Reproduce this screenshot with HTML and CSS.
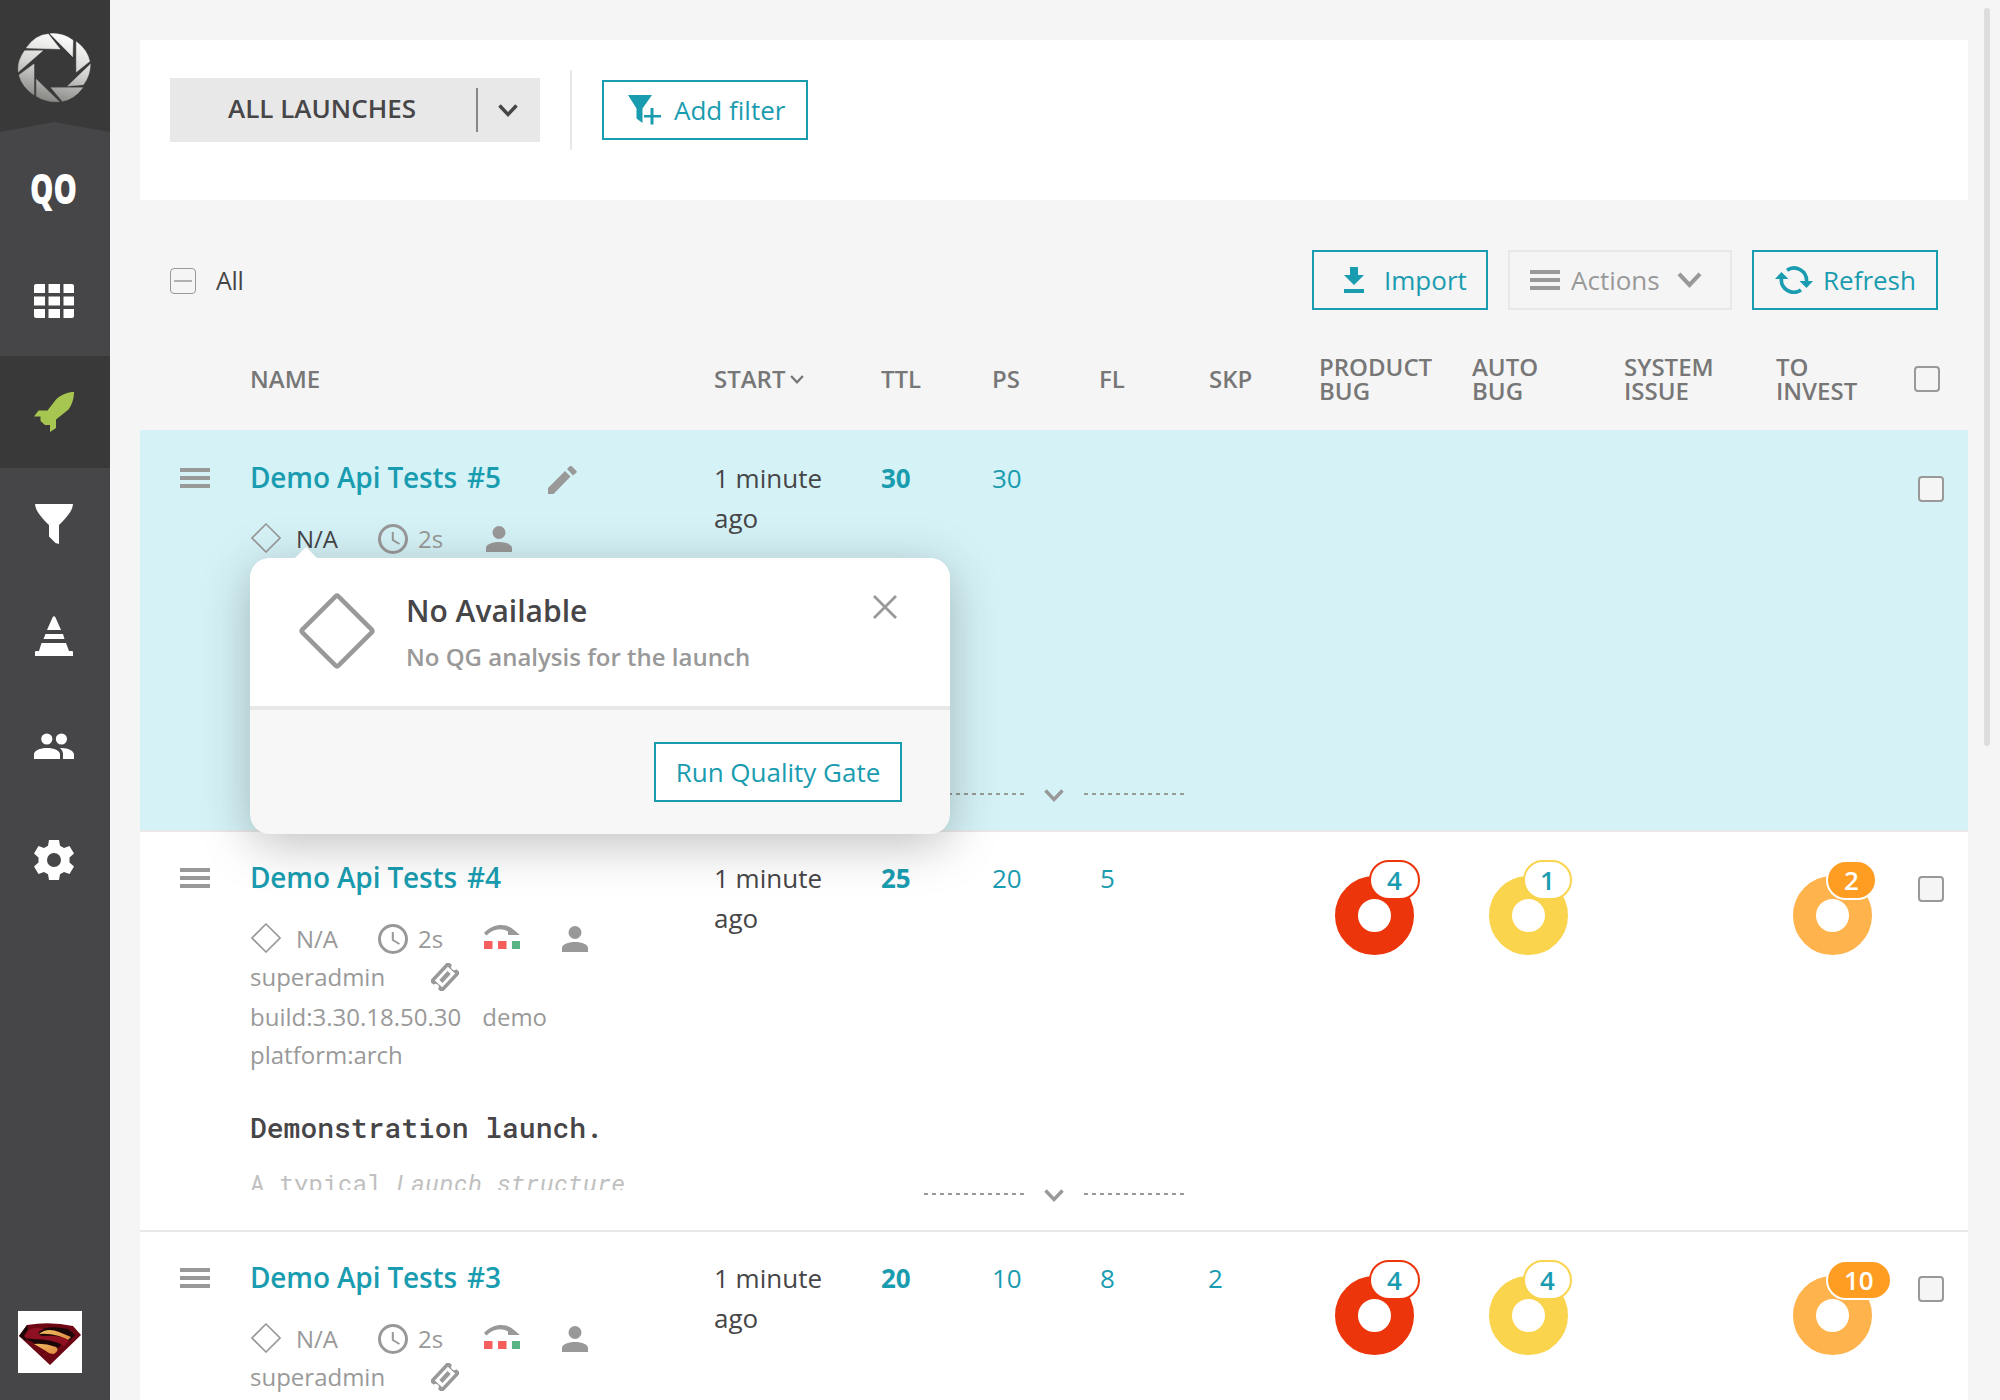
FILE: index.html
```html
<!DOCTYPE html>
<html lang="en">
<head>
<meta charset="utf-8">
<title>Launches</title>
<link rel="stylesheet" href="styles.css">
</head>
<body>
<svg class="defs" width="0" height="0" aria-hidden="true">
  <symbol id="diamond" viewBox="0 0 30 30"><path d="M15 1L29 15L15 29L1 15Z" fill="none" stroke="#999" stroke-width="1.6"/></symbol>
  <symbol id="clock" viewBox="0 0 30 30"><circle cx="15" cy="15" r="13.500" fill="none" stroke="#999" stroke-width="3"/><path d="M14.800 8V16L21.500 20" fill="none" stroke="#999" stroke-width="2"/></symbol>
  <symbol id="user" viewBox="0 0 26 26"><ellipse cx="13" cy="6.500" rx="6.500" ry="6.500" fill="#999"/><path d="M0 26V22C0 18.500 6 16 13 16S26 18.500 26 22V26Z" fill="#999"/></symbol>
  <symbol id="retry" viewBox="0 0 36 24"><path d="M0 8C9-1.500 22-2.500 30 5L36 10H24V6.500C17 2.500 9 4 2.500 10.500Z" fill="#999"/><path d="M0 16H8.500V24H0ZM14 16H22.500V24H14Z" fill="#f75d5d"/><path d="M28 16H36V24H28Z" fill="#57b485"/></symbol>
  <symbol id="ticket" viewBox="0 0 28 28"><g transform="translate(14 14) rotate(-47)"><path d="M-13.500-8.500H13.500V-3A3 3 0 0 0 13.500 3V8.500H-13.500V3A3 3 0 0 0-13.500-3ZM-9.500-5V5H9.500V-5Z" fill="#999" fill-rule="evenodd"/><rect x="-6" y="-2.200" width="12" height="4.400" fill="#999"/></g></symbol>
  <symbol id="burger" viewBox="0 0 30 20"><path d="M0 0H30V4H0ZM0 8H30V12H0ZM0 16H30V20H0Z" fill="#999"/></symbol>
  <symbol id="chevron" viewBox="0 0 20 13"><path d="M1.500 1.500L10 10.500L18.500 1.500" fill="none" stroke="currentColor" stroke-width="3.400"/></symbol>
</svg>
<div class="app">
  <nav class="sidebar">
    <div class="logo">
      <svg class="logo-mark" width="74" height="70" viewBox="51 100 222 210">
        <defs><linearGradient id="steel" gradientUnits="userSpaceOnUse" x1="190" y1="100" x2="140" y2="306"><stop offset="0" stop-color="#fff"/><stop offset=".5" stop-color="#d4d4d2"/><stop offset="1" stop-color="#868683"/></linearGradient></defs>
        <path fill="url(#steel)" stroke="url(#steel)" stroke-width="1.500" d="M79 145Q105 106 145 103L180 148ZM150 102Q190 99 219 122L218 171ZM229 126Q262 150 269 185L229 217ZM271 194Q270 230 250 255L203 259ZM153 264H248Q225 297 187 305ZM109 239L178 306Q140 309 109 290ZM102 193V286Q66 262 57 226ZM74 153H128L55 217Q51 185 74 153Z"/>
      </svg>
      <svg class="logo-roof" width="110" height="10" viewBox="0 0 110 10"><path d="M0 10L54 0L110 10Z" fill="#464547"/></svg>
    </div>
    <div class="nav-item"><span class="project">QO</span></div>
    <div class="nav-item grid-item"><svg width="40" height="34" viewBox="0 0 40 34"><path fill="#fff" d="M2 0H11V9H0V2Q0 0 2 0ZM14.500 0H26V9H14.500ZM29.500 0H38Q40 0 40 2V9H29.500ZM0 12.500H11V21.500H0ZM14.500 12.500H26V21.500H14.500ZM29.500 12.500H40V21.500H29.500ZM0 25H11V34H2Q0 34 0 32ZM14.500 25H26V34H14.500ZM29.500 25H40V32Q40 34 38 34H29.500Z"/></svg></div>
    <div class="nav-item active"><svg width="40" height="40" viewBox="0 0 40 40"><path fill="#a7c551" d="M40 0C40 6 38 13 34.500 17.500L22 27.500V36L16 40V33H11L6.500 29V24.500H0L4.500 18.500H13.500L22 7.500C27 2.500 34 0 40 0Z"/></svg></div>
    <div class="nav-item"><svg width="38" height="40" viewBox="0 0 38 40"><path fill="#fff" d="M0 0H38C37.500 7 32 13 24 21V40L20.500 39L14 32.500V21C6 13 .5 7 0 0Z"/></svg></div>
    <div class="nav-item"><svg width="38" height="40" viewBox="0 0 38 40"><path fill="#fff" d="M17.500 1.500Q19 -1 20.500 1.500L26 14H12ZM10.500 18H28L29.500 23H8.500ZM6.500 27H31L34 35H37Q38 35 38 36V40H0V36Q0 35 1 35H4Z"/></svg></div>
    <div class="nav-item people"><svg width="40" height="26" viewBox="0 0 40 26"><path fill="#fff" d="M0 26V21.500C0 17.500 6 15 13 15S26 17.500 26 21.500V26ZM26 15C33 14.500 40 17.500 40 21.500V26H29V21.500C29 18.500 28 17 26 15Z"/><circle cx="12.800" cy="6" r="5.600" fill="#fff"/><circle cx="27.400" cy="6" r="5.600" fill="#fff"/></svg></div>
    <div class="nav-item"><svg class="gear" width="40" height="40" viewBox="0 0 40 40"><path fill="#fff" fill-rule="evenodd" d="M15 0H25L26 5.800L30 8L35.500 6L40 13.500L35.500 17.500V22.500L40 26.500L35.500 34L30 32L26 34.200L25 40H15L14 34.200L10 32L4.500 34L0 26.500L4.500 22.500V17.500L0 13.500L4.500 6L10 8L14 5.800ZM20 13A7 7 0 1 0 20 27A7 7 0 1 0 20 13Z"/></svg></div>
    <div class="avatar">
      <svg width="64" height="63" viewBox="0 0 64 63">
        <defs><linearGradient id="gold" x1="0" y1="0" x2="1" y2="1"><stop offset="0" stop-color="#f0bc62"/><stop offset="1" stop-color="#e08a40"/></linearGradient></defs>
        <path fill="#6d0714" d="M9 14Q32 10 55 15L63 24L32 54L1 25Z"/>
        <path fill="#1c0708" d="M17 22Q28 13 50 18L57 24L51 30L38 26L20 26ZM8 28Q27 24 44 29Q46 33 38 38L18 33Z"/>
        <path fill="url(#gold)" d="M21 23Q29 16 41 21L53 26L50 29L41 25Q30 22 21 23Z"/>
        <path fill="url(#gold)" d="M16 33Q27 32 38 36Q42 39 36 43Q31 43 28 40Z"/>
        <path fill="#8f1020" d="M8 21Q15 15 26 18Q16 22 24 25Q46 24 51 30L46 35Q36 28 14 28L5 25Z"/>
        <path fill="#1c0708" d="M1 25L9 14L10 19L6 25L10 31Z"/>
      </svg>
    </div>
  </nav>

  <main class="main">
    <section class="filters">
      <div class="select">
        <span class="select-label">ALL LAUNCHES</span>
        <span class="select-arrow"><svg width="20" height="13"><use href="#chevron"/></svg></span>
      </div>
      <div class="separator"></div>
      <button class="btn add-filter">
        <svg width="33" height="30" viewBox="0 0 33 30"><path fill="#1a9cb0" d="M0 0H24L14.500 13.500V28L8.500 23.500V13.500ZM22.500 13H25.500V20H33V22.500H25.500V29.500H22.500V22.500H16V20H22.500Z"/></svg>
        <span>Add filter</span>
      </button>
    </section>

    <section class="toolbar">
      <span class="checkbox partial"></span>
      <span class="all">All</span>
      <div class="actions">
        <button class="btn import"><svg width="20" height="26" viewBox="0 0 20 26"><path fill="#1a9cb0" d="M6 0H14V8H20L10 18L0 8H6ZM0 22H20V26H0Z"/></svg><span>Import</span></button>
        <button class="btn disabled"><svg width="30" height="20"><use href="#burger"/></svg><span>Actions</span><svg class="drop" width="25" height="16"><use href="#chevron"/></svg></button>
        <button class="btn refresh"><svg width="38" height="28" viewBox="0 0 38 28"><g fill="none" stroke="#1a9cb0" stroke-width="3.600"><path d="M12 4.200A12.500 12.500 0 0 1 31.500 15.500"/><path d="M26 24A12.500 12.500 0 0 1 6.500 12"/></g><path fill="#1a9cb0" d="M24.500 15H38L31.500 22ZM0 13H13.500L6.500 6Z"/></svg><span>Refresh</span></button>
      </div>
    </section>

    <header class="grid head">
      <span></span><span>NAME</span><span class="sorted">START<svg width="14" height="9"><use href="#chevron"/></svg></span><span>TTL</span><span>PS</span><span>FL</span><span>SKP</span>
      <span>PRODUCT<br>BUG</span><span>AUTO<br>BUG</span><span>SYSTEM<br>ISSUE</span><span>TO<br>INVEST</span><span class="checkbox"></span>
    </header>

    <article class="row selected">
      <div class="grid">
        <svg class="menu" width="30" height="20"><use href="#burger"/></svg>
        <div class="name">
          <h3>Demo Api Tests <b>#5</b><svg class="pencil" width="29" height="28" viewBox="0 0 29 28"><path fill="#999" d="M0 22L17 5L22.500 10.500L5.500 28H0ZM19 3L22 0Q23 -.5 24 .5L28.500 5Q29 6 28 7L25 9.500Z"/></svg></h3>
          <div class="meta"><svg class="diamond" width="30" height="30"><use href="#diamond"/></svg><span class="na on">N/A</span><svg class="clock" width="30" height="30"><use href="#clock"/></svg><span class="dur">2s</span><svg class="user lone" width="26" height="26"><use href="#user"/></svg></div>
          <aside class="popover">
            <svg class="tip" width="24" height="12" viewBox="0 0 24 12"><path d="M0 12L11 1Q12 0 13 1L24 12Z" fill="#fff"/></svg>
            <div class="pop-body">
              <svg width="76" height="76" viewBox="0 0 76 76"><path d="M36.600 3.300Q38 2 39.400 3.300L72.700 36.600Q74 38 72.700 39.400L39.400 72.700Q38 74 36.600 72.700L3.300 39.400Q2 38 3.300 36.600Z" fill="none" stroke="#999" stroke-width="4.500"/></svg>
              <div class="pop-text"><strong>No Available</strong><span>No QG analysis for the launch</span></div>
              <svg class="close" width="24" height="24" viewBox="0 0 24 24"><path d="M1 1L23 23M23 1L1 23" stroke="#999" stroke-width="2.800"/></svg>
            </div>
            <div class="pop-foot"><button class="btn run">Run Quality Gate</button></div>
          </aside>
        </div>
        <span class="cell">1 minute<br>ago</span><a class="cell ttl">30</a><a class="cell">30</a><span></span><span></span><span></span><span></span><span></span><span></span><span class="checkbox"></span>
      </div>
      <div class="expander"><i></i><svg width="20" height="13"><use href="#chevron"/></svg><i></i></div>
    </article>

    <article class="row">
      <div class="grid">
        <svg class="menu" width="30" height="20"><use href="#burger"/></svg>
        <div class="name">
          <h3>Demo Api Tests <b>#4</b></h3>
          <div class="meta"><svg class="diamond" width="30" height="30"><use href="#diamond"/></svg><span class="na">N/A</span><svg class="clock" width="30" height="30"><use href="#clock"/></svg><span class="dur">2s</span><svg class="retry" width="36" height="24"><use href="#retry"/></svg><svg class="user" width="26" height="26"><use href="#user"/></svg></div>
          <div class="meta by"><span class="owner">superadmin</span><svg class="ticket" width="28" height="28"><use href="#ticket"/></svg></div>
          <div class="meta tags"><span>build:3.30.18.50.30</span><span>demo</span></div>
          <div class="meta"><span>platform:arch</span></div>
          <div class="description"><h4>Demonstration launch.</h4><p>A typical <em>Launch structure</em></p></div>
        </div>
        <span class="cell">1 minute<br>ago</span><a class="cell ttl">25</a><a class="cell">20</a><a class="cell fl">5</a><span></span>
        <div class="donut red"><a>4</a></div><div class="donut yellow"><a>1</a></div><span></span><div class="donut orange"><a>2</a></div><span class="checkbox"></span>
      </div>
      <div class="expander"><i></i><svg width="20" height="13"><use href="#chevron"/></svg><i></i></div>
    </article>

    <article class="row">
      <div class="grid">
        <svg class="menu" width="30" height="20"><use href="#burger"/></svg>
        <div class="name">
          <h3>Demo Api Tests <b>#3</b></h3>
          <div class="meta"><svg class="diamond" width="30" height="30"><use href="#diamond"/></svg><span class="na">N/A</span><svg class="clock" width="30" height="30"><use href="#clock"/></svg><span class="dur">2s</span><svg class="retry" width="36" height="24"><use href="#retry"/></svg><svg class="user" width="26" height="26"><use href="#user"/></svg></div>
          <div class="meta by"><span class="owner">superadmin</span><svg class="ticket" width="28" height="28"><use href="#ticket"/></svg></div>
        </div>
        <span class="cell">1 minute<br>ago</span><a class="cell ttl">20</a><a class="cell">10</a><a class="cell fl">8</a><a class="cell skp">2</a>
        <div class="donut red"><a>4</a></div><div class="donut yellow"><a>4</a></div><span></span><div class="donut orange"><a>10</a></div><span class="checkbox"></span>
      </div>
    </article>
  </main>
  <div class="scrollbar"></div>
</div>
</body>
</html>
```
FILE: styles.css
```css
* { box-sizing: border-box; }
body { margin: 0; font-family: "Open Sans", "Noto Sans", sans-serif; font-size: 26px; color: #464547; background: #f5f5f5; }
svg { display: block; flex: none; }
.defs { position: absolute; }
.app { display: flex; height: 1400px; overflow: hidden; }

/* sidebar */
.sidebar { width: 110px; flex: none; background: #464547; display: flex; flex-direction: column; }
.logo { height: 132px; flex: none; background: #393939; display: flex; flex-direction: column; justify-content: space-between; padding-top: 33px; }
.logo-mark { margin-left: 17px; }
.nav-item { height: 112px; flex: none; display: flex; align-items: center; justify-content: center; padding-right: 2px; }
.nav-item.active { background: #393939; }
.nav-item.grid-item { padding-top: 2px; }
.nav-item.people { padding-bottom: 4px; }
.project { font-weight: 800; font-size: 42px; line-height: 56px; color: #fff; transform: scaleX(.7); margin-right: 1px; }
.avatar { width: 64px; height: 62px; margin: auto 0 27px 18px; background: #fff; }

/* page */
.main { flex: 1; min-width: 0; padding: 40px 32px 0 30px; display: flex; flex-direction: column; }
.scrollbar { width: 6px; height: 738px; margin: 8px 10px 0 -16px; flex: none; border-radius: 3px; background: #ddd; }
.btn { font: inherit; height: 60px; border: 2px solid #1a9cb0; border-radius: 0; background: transparent; color: #1a9cb0; display: flex; align-items: center; padding: 0; margin: 0; white-space: nowrap; }
.checkbox { display: block; width: 26px; height: 26px; flex: none; border: 2px solid #999; border-radius: 4px; background: #f5f5f5; }
.checkbox.partial { display: flex; align-items: center; justify-content: center; margin-top: 2px; border-width: 1.500px; }
.checkbox.partial::before { content: ""; width: 18px; height: 2px; background: #b0b0b0; }

.filters { height: 160px; flex: none; background: #fff; padding: 30px; display: flex; }
.select { width: 370px; height: 64px; margin-top: 8px; background: #e8e8e8; display: flex; align-items: center; }
.select-label { width: 306px; padding-left: 58px; font-weight: 600; line-height: 60px; height: 64px; }
.select-arrow { height: 44px; width: 63px; border-left: 2px solid #888; display: flex; align-items: center; padding-left: 20px; }
.separator { width: 2px; height: 80px; background: #e8e8e8; margin: 0 30px; }
.add-filter { margin-top: 10px; width: 206px; padding-left: 24px; gap: 13px; }

.toolbar { height: 110px; flex: none; display: flex; align-items: center; padding: 52px 30px 2px; }
.all { margin: -1px 0 0 20px; font-size: 25px; letter-spacing: -.3px; }
.actions { margin-left: auto; display: flex; gap: 20px; }
.import { width: 176px; padding-left: 30px; }
.import span { margin-left: 20px; }
.disabled { width: 224px; padding-left: 20px; color: #999; border-color: #e8e8e8; }
.disabled span { margin-left: 11px; }
.drop { margin-left: 17px; }
.refresh { width: 186px; padding-left: 21px; }
.refresh span { margin-left: 10px; }

/* table */
.grid { display: grid; grid-template-columns: 110px 464px 167px 111px 107px 110px 110px 153px 152px 152px 138px 1fr; }
.head { height: 120px; flex: none; align-items: center; padding-top: 18px; font-size: 24px; font-weight: 600; line-height: 24px; color: #777; }
.sorted { display: flex; align-items: center; gap: 4px; }
.row { height: 400px; flex: none; background: #fff; border-bottom: 2px solid #e8e8e8; display: flex; flex-direction: column; }
.row .grid { flex: 1; min-height: 0; align-items: start; }
.row.selected { height: 402px; padding-top: 2px; background: #d5f3f7; }
.row .checkbox { margin: 44px 0 0 4px; }
.menu { margin: 36px 0 0 40px; }
.name { position: relative; padding-top: 25px; }
.name h3 { margin: 0 0 23px; font-size: 28px; line-height: 40px; font-weight: 600; letter-spacing: -.15px; color: #1a9cb0; display: flex; align-items: center; }
.name h3 b { font-weight: 600; margin-left: 10px; }
.pencil { margin: 5px 0 0 47px; }
.meta { height: 38.670px; display: flex; align-items: center; font-size: 24px; line-height: 38px; color: #999; white-space: nowrap; }
.meta.by { padding-bottom: 2px; }
.diamond { margin: -2px 0 0 1px; }
.na { margin-left: 15px; width: 82px; }
.na.on { color: #464547; }
.dur { margin-left: 10px; width: 66px; }
.retry { margin: -4px 42px 0 0; }
.user.lone { margin-left: 2px; }
.owner { width: 181px; }
.tags { gap: 21px; }
.description { margin-top: 33px; height: 82px; overflow: hidden; font-family: "Roboto Mono", "Liberation Mono", monospace; white-space: nowrap; }
.description h4 { margin: 0 0 20px; font-size: 28px; line-height: 40px; font-weight: 500; }
.description p { margin: 0; font-size: 24px; letter-spacing: .24px; line-height: 30px; color: #c0c0c0; }
.cell { padding-top: 26px; line-height: 40px; }
a { color: #1a9cb0; }
.ttl { font-weight: 700; }
.fl { padding-left: 1px; }
.skp { margin-left: -1px; }
.donut { position: relative; width: 79px; height: 79px; margin: 44px 0 0 17px; border: 23px solid; border-radius: 50%; }
.donut a { position: absolute; left: 11px; top: -39px; min-width: 51px; height: 40px; padding: 0 16px; border: 2px solid; border-radius: 20px; background: #fff; font-weight: 600; line-height: 36px; text-align: center; border-color: inherit; }
.red { border-color: #ec350b; margin-left: 16px; }
.yellow { border-color: #f9d44c; }
.yellow a { min-width: 49px; padding: 0 15px; }
.orange { border-color: #ffb34d; }
.orange a { left: 10px; background: #ff9c22; color: #fff; border-color: #fff; }
.expander { display: flex; justify-content: center; gap: 20px; height: 14px; margin-bottom: 27px; color: #999; }
.expander i { width: 100px; height: 2px; margin-top: 4px; background: repeating-linear-gradient(90deg, #999 0 4px, transparent 4px 8px); }

/* quality gate popover */
.popover { position: absolute; left: 0; top: 126px; width: 700px; height: 276px; z-index: 2; border-radius: 20px; background: #f7f7f7; box-shadow: 0 10px 50px rgba(0, 0, 0, .25); }
.tip { position: absolute; left: 44px; top: -11px; }
.pop-body { height: 152px; border-bottom: 4px solid #e8e8e8; border-radius: 20px 20px 0 0; background: #fff; display: flex; padding: 35px 53px 0 49px; }
.pop-text { margin-left: 31px; flex: 1; display: flex; flex-direction: column; }
.pop-text strong { font-size: 30px; font-weight: 600; line-height: 40px; margin-top: -2px; }
.pop-text span { font-size: 24px; font-weight: 600; line-height: 36px; margin-top: 8px; color: #999; }
.close { margin-top: 2px; }
.pop-foot { display: flex; justify-content: flex-end; padding: 32px 48px; }
.run { width: 248px; justify-content: center; background: #fff; }
```
